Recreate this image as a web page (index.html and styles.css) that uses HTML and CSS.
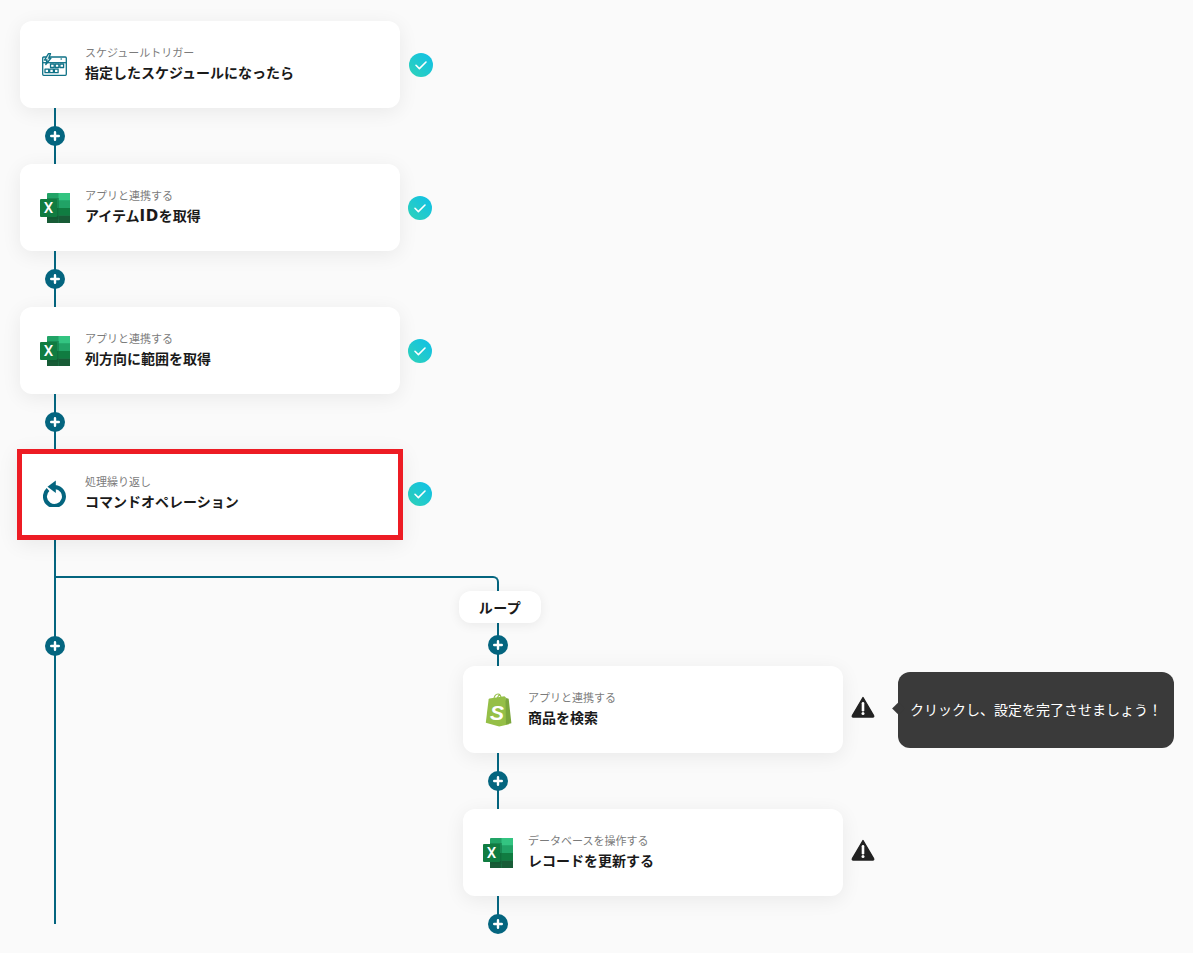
FILE: index.html
```html
<!DOCTYPE html>
<html lang="ja">
<head>
<meta charset="utf-8">
<title>フロー</title>
<link rel="stylesheet" href="styles.css">
</head>
<body>
<svg class="defs" width="0" height="0" aria-hidden="true">
  <defs>
    <linearGradient id="chk" x1="0" y1="1" x2="1" y2="0">
      <stop offset="0" stop-color="#2fd3b8"/>
      <stop offset="1" stop-color="#0fbfe8"/>
    </linearGradient>
    <symbol id="plus" viewBox="0 0 20 20">
      <circle cx="10" cy="10" r="10" fill="#04657f"/>
      <path d="M10 6.200v7.600M6.200 10h7.600" stroke="#fff" stroke-width="2.400" stroke-linecap="round"/>
    </symbol>
    <symbol id="check" viewBox="0 0 24 24">
      <circle cx="12" cy="12" r="12" fill="url(#chk)"/>
      <path d="M7 12.300l3.400 3.300L17 9" fill="none" stroke="#fff" stroke-width="1.600" stroke-linecap="round" stroke-linejoin="round"/>
    </symbol>
    <symbol id="warn" viewBox="0 0 24 22">
      <path d="M12 1.600L22.600 19.600a.9.9 0 0 1-.8 1.400H2.200a.9.9 0 0 1-.8-1.400z" fill="#222" stroke="#222" stroke-width="1.400" stroke-linejoin="round"/>
      <path d="M12 7.200v7" stroke="#fff" stroke-width="2.600" stroke-linecap="round"/>
      <circle cx="12" cy="17.600" r="1.500" fill="#fff"/>
    </symbol>
    <symbol id="excel" viewBox="0 0 30 30">
      <rect x="7" y="0" width="23" height="30" rx="1" fill="#21a366"/>
      <rect x="18.500" y="0" width="11.500" height="7.500" fill="#33c481"/>
      <rect x="18.500" y="7.500" width="11.500" height="7.500" fill="#21a366"/>
      <rect x="18.500" y="15" width="11.500" height="7.500" fill="#107c41"/>
      <rect x="18.500" y="22.500" width="11.500" height="7.500" fill="#185c37"/>
      <rect x="7" y="15" width="11.500" height="7.500" fill="#107c41"/>
      <rect x="7" y="22.500" width="11.500" height="7.500" fill="#185c37"/>
      <rect x="7" y="5" width="12" height="21" fill="#0b5a32" opacity=".35"/>
      <rect x="0" y="6" width="17" height="18" rx="1" fill="#107c41"/>
      <text x="8.500" y="20" text-anchor="middle" class="xl">X</text>
    </symbol>
  </defs>
</svg>

<main class="canvas">
  <section class="main-col">
    <div class="step">
      <article class="card">
        <svg class="ic-cal" viewBox="0 0 25 23" fill="none" stroke="#0f7287" stroke-width="1.300" stroke-linejoin="round">
          <path d="M1.700 4h21.600a1 1 0 0 1 1 1v16.300a1 1 0 0 1-1 1H1.700a1 1 0 0 1-1-1V5a1 1 0 0 1 1-1z"/>
          <path d="M.7 9.700h23.600"/>
          <path d="M6.500.7L2.500 7H5l-1.200 4.500L9 5.200H6.700L8.500.7z" fill="#d5e9ed"/>
          <path d="M18.600 6h1.200" stroke-width="1.300"/>
          <rect x="8.500" y="11" width="3.700" height="3.500"/><rect x="13.200" y="11" width="3.700" height="3.500"/><rect x="17.900" y="11" width="3.700" height="3.500"/>
          <rect x="3" y="16.200" width="3.700" height="3.500"/><rect x="7.700" y="16.200" width="3.700" height="3.500"/><rect x="12.400" y="16.200" width="3.700" height="3.500"/>
        </svg>
        <div class="txt"><p class="sub">スケジュールトリガー</p><p class="ttl">指定したスケジュールになったら</p></div>
      </article>
      <svg class="status status-first"><use href="#check"/></svg>
    </div>
    <div class="link"><svg class="plus"><use href="#plus"/></svg></div>

    <div class="step">
      <article class="card">
        <svg class="ic"><use href="#excel"/></svg>
        <div class="txt"><p class="sub">アプリと連携する</p><p class="ttl">アイテム<span class="latin">ID</span>を取得</p></div>
      </article>
      <svg class="status"><use href="#check"/></svg>
    </div>
    <div class="link"><svg class="plus"><use href="#plus"/></svg></div>

    <div class="step">
      <article class="card">
        <svg class="ic"><use href="#excel"/></svg>
        <div class="txt"><p class="sub">アプリと連携する</p><p class="ttl">列方向に範囲を取得</p></div>
      </article>
      <svg class="status"><use href="#check"/></svg>
    </div>
    <div class="link"><svg class="plus"><use href="#plus"/></svg></div>

    <div class="step">
      <article class="card card-hl">
        <svg class="ic-loop" viewBox="0 0 24 27" fill="none">
          <path d="M5 9.500A9.500 9.500 0 1 0 12 7" stroke="#04657f" stroke-width="4"/>
          <path d="M12.800 .5v12.500L4.500 6.700z" fill="#04657f"/>
        </svg>
        <div class="txt"><p class="sub">処理繰り返し</p><p class="ttl">コマンドオペレーション</p></div>
      </article>
      <svg class="status status-hl"><use href="#check"/></svg>
    </div>
    <div class="trunk"><svg class="plus trunk-plus"><use href="#plus"/></svg></div>
  </section>

  <div class="branch-line"></div>

  <section class="loop-col">
    <div class="pill">ループ</div>
    <div class="link link-a"><svg class="plus"><use href="#plus"/></svg></div>
    <div class="step">
      <article class="card">
        <svg class="ic ic-shop" viewBox="0 0 30 34">
          <path d="M10.500 7.500C11 3.800 12.800 1 15 1c2 0 3 2.200 3.300 4.800M14 6.600c.4-2.300 1.500-4.200 2.700-4.600" fill="none" stroke="#95bf47" stroke-width="1.200"/>
          <path d="M2.800 29.800L5.600 6.600c.1-.6.5-1 1-1.100L21.400 3.300l1 .6 3.600 27.300-9.800 2.300z" fill="#95bf47"/>
          <path d="M22.400 3.900l1.200 1.400 1.500.2c.3 0 .5.2.6.5L28.400 30.300 23 31.500z" fill="#7ba63c"/>
          <text x="14" y="27" text-anchor="middle" class="sh">S</text>
        </svg>
        <div class="txt"><p class="sub">アプリと連携する</p><p class="ttl">商品を検索</p></div>
      </article>
      <svg class="alert"><use href="#warn"/></svg>
      <div class="tip">クリックし、設定を完了させましょう！</div>
    </div>
    <div class="link"><svg class="plus"><use href="#plus"/></svg></div>
    <div class="step">
      <article class="card">
        <svg class="ic"><use href="#excel"/></svg>
        <div class="txt"><p class="sub">データベースを操作する</p><p class="ttl">レコードを更新する</p></div>
      </article>
      <svg class="alert"><use href="#warn"/></svg>
    </div>
    <div class="link link-end"><svg class="plus"><use href="#plus"/></svg></div>
  </section>
</main>
</body>
</html>
```
FILE: styles.css
```css
* { box-sizing: border-box; }
html, body { margin: 0; height: 953px; overflow: hidden; background: #fafafa; }
body { font-family: "Noto Sans CJK JP", "Noto Sans", sans-serif; color: #1c1c1c; }
p { margin: 0; }
.defs { position: absolute; }
.xl { font: 500 15px Roboto, sans-serif; fill: #fff; }
.sh { font: italic 700 21px "Liberation Sans", sans-serif; fill: #fff; }

.canvas { position: relative; width: 1193px; height: 953px; }
.main-col { position: absolute; left: 20px; top: 21px; width: 420px; display: flex; flex-direction: column; }
.loop-col { position: absolute; left: 439px; top: 591px; width: 740px; display: flex; flex-direction: column; }

.step { display: flex; align-items: center; height: 87px; position: relative; }
.card {
  width: 380px; height: 87px; flex: none; background: #fff; border-radius: 12px;
  display: flex; align-items: center; padding-left: 20px;
  box-shadow: 0 4px 20px rgba(0, 0, 0, .07);
}
.loop-col .step { margin-left: 24px; }
.card-hl {
  width: 386px; height: 91px; margin: -1px 0 0 -3px; align-self: flex-start;
  padding: 0 0 2px 18px; border: 5px solid #ed1c24; border-radius: 0;
  position: relative; z-index: 1;
}

.ic { width: 30px; height: 30px; flex: none; }
.ic-cal { width: 25px; height: 23px; flex: none; margin: 0 3px 0 2px; }
.ic-loop { width: 24px; height: 27px; flex: none; margin: 0 3px; }
.ic-shop { height: 34px; }
.txt { margin-left: 15px; padding-bottom: 4px; display: flex; flex-direction: column; }
.sub { font-size: 11px; line-height: 16px; color: #7b7b7b; }
.ttl { font-size: 14px; line-height: 20px; height: 20px; font-weight: 700; color: #1a1a1a; margin-top: 2px; }
.latin { font-family: "DejaVu Sans", sans-serif; font-size: 15px; line-height: 1; letter-spacing: .6px; }

.status { width: 24px; height: 24px; margin-left: 8px; flex: none; }
.status-first { margin-left: 9px; }
.status-hl { margin-left: 5px; }
.alert { width: 24px; height: 22px; margin: 0 0 5px 8px; flex: none; }
.tip {
  position: absolute; left: 435px; top: 6px; width: 276px; height: 76px; padding-bottom: 3px;
  background: #3a3a3a; color: #fff; border-radius: 12px;
  font-size: 14px; display: flex; align-items: center; justify-content: center;
}
.tip::before {
  content: ""; position: absolute; left: -4px; top: 32px; width: 9px; height: 9px;
  background: #3a3a3a; transform: rotate(45deg);
}

.link { width: 2px; height: 56px; margin-left: 34px; background: #04657f; position: relative; display: flex; align-items: center; justify-content: center; }
.plus { width: 20px; height: 20px; flex: none; }
.loop-col .link { margin-left: 58px; }
.link-a { height: 43px; }
.link-end { height: 28px; }
.link-end .plus { position: absolute; top: 18px; left: -9px; }

.trunk { width: 2px; height: 387px; margin-left: 34px; background: #04657f; position: relative; }
.trunk-plus { position: absolute; left: -9px; top: 99px; }
.branch-line {
  position: absolute; left: 55px; top: 576px; width: 444px; height: 16px;
  border-top: 2px solid #04657f; border-right: 2px solid #04657f; border-top-right-radius: 6px;
}

.pill {
  width: 82px; height: 32px; margin-left: 20px; padding-bottom: 1px; background: #fff; border-radius: 12px;
  display: flex; align-items: center; justify-content: center;
  font-size: 14px; font-weight: 700; letter-spacing: .5px; color: #1a1a1a;
  box-shadow: 0 2px 12px rgba(0, 0, 0, .07); position: relative; z-index: 1;
}
```
